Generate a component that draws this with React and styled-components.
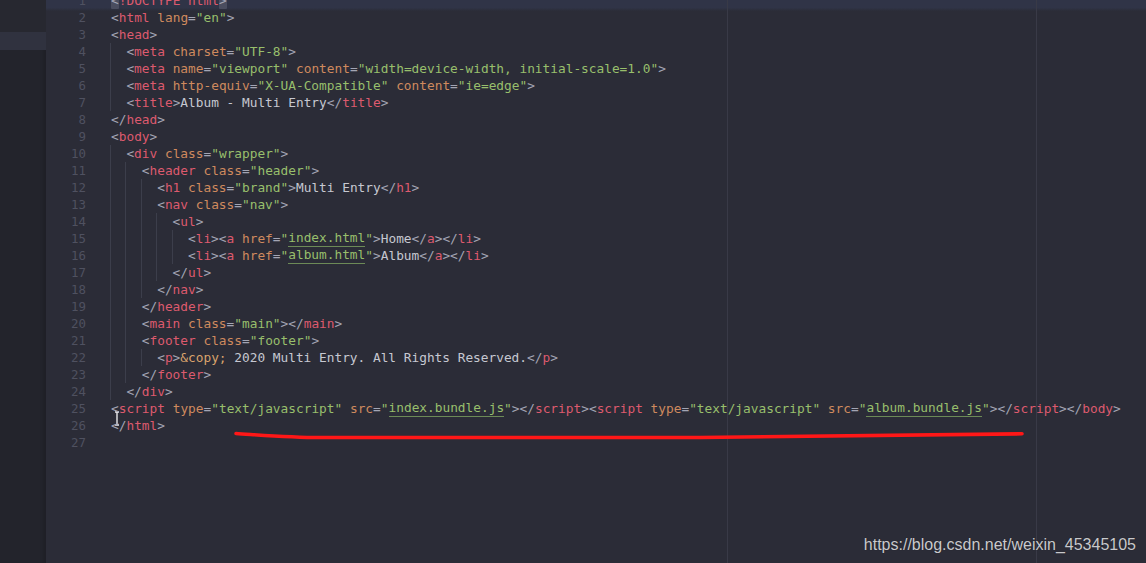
import React from "react";
import styled, { createGlobalStyle } from "styled-components";

const GlobalStyle = createGlobalStyle`
  html, body {
    margin: 0;
    padding: 0;
    background: #2b2c37;
  }
`;

const Window = styled.div`
  position: relative;
  display: flex;
  width: 1146px;
  height: 563px;
  overflow: hidden;
  background: #2b2c37;
`;

const Sidebar = styled.div`
  width: 46px;
  flex-shrink: 0;
  display: flex;
  flex-direction: column;
  background: #23242c;
  box-shadow: inset -3px 0 3px rgba(0, 0, 0, 0.12);

  .top {
    height: 32px;
    background: #272830;
  }
  .selected {
    height: 18px;
    background: #30323f;
  }
`;

const Editor = styled.div`
  position: relative;
  flex: 1;
  overflow: hidden;
  font-family: "DejaVu Sans Mono", "Liberation Mono", monospace;
  font-size: 12.8px;
`;

const TopShade = styled.div`
  position: absolute;
  left: 0;
  right: 0;
  top: 0;
  height: 11px;
  background: linear-gradient(#303447, #303447 70%, rgba(43, 44, 55, 0));
  pointer-events: none;
`;

const Ruler = styled.div`
  position: absolute;
  top: 0;
  bottom: 0;
  left: ${(p) => p.$x}px;
  width: 1px;
  background: #393a47;
`;

const Lines = styled.div`
  position: relative;
  z-index: 1;
  display: flex;
  flex-direction: column;
  margin-top: -8px;
`;

const Row = styled.div`
  display: flex;
  height: 17px;
  line-height: 17px;
  white-space: pre;
`;

const Num = styled.div`
  width: 40px;
  padding-right: 14px;
  text-align: right;
  color: #4f5160;
  font-size: 12.4px;
`;

const Code = styled.div`
  display: flex;
  padding-left: 11px;
  color: #c6c8d1;
`;

const Indent = styled.span`
  display: inline-block;
  width: 15.4px;
  height: 17px;
  border-left: 1px solid #3c3e4b;
  box-sizing: border-box;
  margin-left: -1px;
  margin-right: 1px;
`;

const Tok = styled.span`
  color: ${(p) =>
    ({
      p: "#a3a5b4",
      t: "#dd5a6e",
      a: "#cf8a5e",
      s: "#98bf6c",
      e: "#d9a36c",
      x: "#c6c8d1",
    })[p.$k]};
  ${(p) => p.$u && "border-bottom: 1px solid #6c8a57; line-height: 15px; display: inline-block;"}
  ${(p) => p.$m && "background: #4a4d5f; border-radius: 1px;"}
`;

const Watermark = styled.div`
  position: absolute;
  right: 10px;
  bottom: 9px;
  font-family: "Liberation Sans", Arial, sans-serif;
  font-size: 16px;
  color: #c9c9cc;
  text-shadow: 0 0 1px rgba(0, 0, 0, 0.4);
`;

const Overlay = styled.svg`
  position: absolute;
  left: 0;
  top: 0;
  pointer-events: none;
`;

const LINKS = ["index.html", "album.html", "index.bundle.js", "album.bundle.js"];

const source = [
  [0, '<!DOCTYPE html>'],
  [0, '<html lang="en">'],
  [0, "<head>"],
  [1, '<meta charset="UTF-8">'],
  [1, '<meta name="viewport" content="width=device-width, initial-scale=1.0">'],
  [1, '<meta http-equiv="X-UA-Compatible" content="ie=edge">'],
  [1, "<title>Album - Multi Entry</title>"],
  [0, "</head>"],
  [0, "<body>"],
  [1, '<div class="wrapper">'],
  [2, '<header class="header">'],
  [3, '<h1 class="brand">Multi Entry</h1>'],
  [3, '<nav class="nav">'],
  [4, "<ul>"],
  [5, '<li><a href="index.html">Home</a></li>'],
  [5, '<li><a href="album.html">Album</a></li>'],
  [4, "</ul>"],
  [3, "</nav>"],
  [2, "</header>"],
  [2, '<main class="main"></main>'],
  [2, '<footer class="footer">'],
  [3, "<p>&copy; 2020 Multi Entry. All Rights Reserved.</p>"],
  [2, "</footer>"],
  [1, "</div>"],
  [0, '<script type="text/javascript" src="index.bundle.js"></script><script type="text/javascript" src="album.bundle.js"></script></body>'],
  [0, "</html>"],
  [0, ""],
];

// tiny html highlighter
function tokenize(line) {
  const out = [];
  let i = 0;
  while (i < line.length) {
    if (line[i] === "<") {
      const close = line[i + 1] === "/";
      out.push(["p", close ? "</" : "<"]);
      i += close ? 2 : 1;
      let j = i;
      while (j < line.length && /[^\s>]/.test(line[j])) j++;
      out.push(["t", line.slice(i, j)]);
      i = j;
      while (i < line.length && line[i] !== ">") {
        if (line[i] === " ") {
          out.push(["x", " "]);
          i++;
        } else if (line[i] === "=") {
          out.push(["p", "="]);
          i++;
        } else if (line[i] === '"') {
          const end = line.indexOf('"', i + 1);
          const val = line.slice(i + 1, end);
          out.push(["s", '"']);
          out.push(["s", val, LINKS.includes(val)]);
          out.push(["s", '"']);
          i = end + 1;
        } else {
          let k = i;
          while (k < line.length && /[^\s=>]/.test(line[k])) k++;
          out.push([line.slice(i, k) === "html" ? "t" : "a", line.slice(i, k)]);
          i = k;
        }
      }
      if (i < line.length) {
        out.push(["p", ">"]);
        i++;
      }
    } else if (line.startsWith("&copy;", i)) {
      out.push(["e", "&copy;"]);
      i += 6;
    } else {
      let k = i;
      while (k < line.length && line[k] !== "<" && !line.startsWith("&copy;", k)) k++;
      out.push(["x", line.slice(i, k)]);
      i = k;
    }
  }
  return out;
}

function CodeLine({ n, indent, text }) {
  const toks = tokenize(text);
  return (
    <Row>
      <Num>{n}</Num>
      <Code>
        {Array.from({ length: indent }).map((_, i) => (
          <Indent key={i} />
        ))}
        {toks.map(([k, v, u], i) => (
          <Tok
            key={i}
            $k={k}
            $u={u}
            $m={n === 1 && (i === 0 || i === toks.length - 1)}
          >
            {v}
          </Tok>
        ))}
      </Code>
    </Row>
  );
}

export default function App() {
  return (
    <>
      <GlobalStyle />
      <Window>
        <Sidebar>
          <div className="top" />
          <div className="selected" />
        </Sidebar>
        <Editor>
          <TopShade />
          <Ruler $x={681} />
          <Ruler $x={990} />
          <Lines>
            {source.map(([indent, text], i) => (
              <CodeLine key={i} n={i + 1} indent={indent} text={text} />
            ))}
          </Lines>
        </Editor>
        <Overlay width="1146" height="563" viewBox="0 0 1146 563">
          <path
            d="M236 433.5 C 260 435, 290 437.5, 320 437.5 L 700 437.5 C 820 436.5, 930 434.5, 1022 433.8"
            fill="none"
            stroke="#ff1717"
            strokeWidth="3.6"
            strokeLinecap="round"
          />
          <g stroke="#e8e8ec" strokeWidth="1.4" fill="none">
            <path d="M115 412 h4 M117 412 v13 M115 425 h4" />
          </g>
        </Overlay>
        <Watermark>https://blog.csdn.net/weixin_45345105</Watermark>
      </Window>
    </>
  );
}
